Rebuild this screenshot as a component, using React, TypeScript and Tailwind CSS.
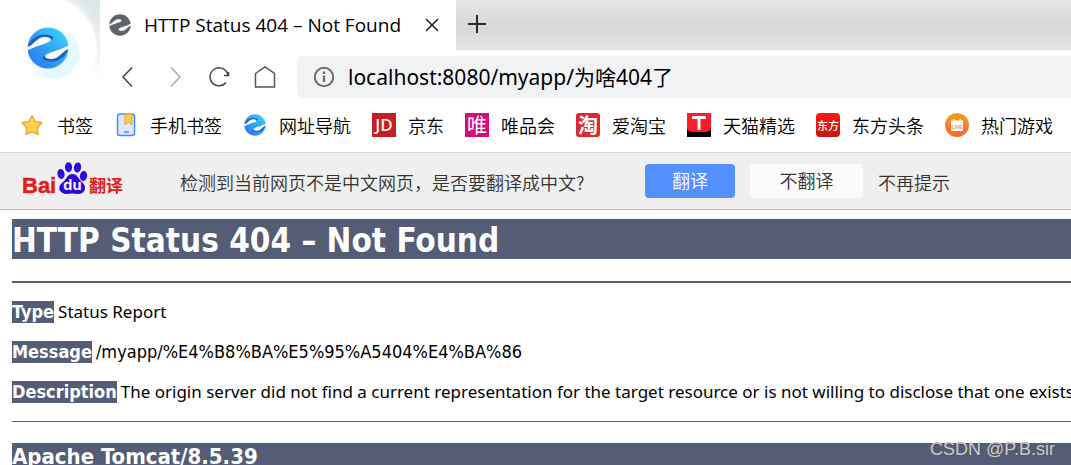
import {useId} from 'react';

const bookmarks = [
  {label: '书签', icon: <StarIcon />},
  {label: '手机书签', icon: <PhoneBookmarkIcon />},
  {label: '网址导航', icon: <BrowserLogo className="w-[22px] h-[22px]" />},
  {
    label: '京东',
    icon: (
      <span className="w-6 h-6 flex items-center justify-center bg-[#c41e25] text-[#fbeeee] text-[17px] leading-6 font-semibold font-['Open_Sans',sans-serif]">
        JD
      </span>
    ),
  },
  {
    label: '唯品会',
    icon: (
      <span className="w-6 h-6 flex items-center justify-center bg-[#d20d7c] text-white text-[20px] font-normal leading-6">
        唯
      </span>
    ),
  },
  {
    label: '爱淘宝',
    icon: (
      <span className="w-6 h-6 flex items-center justify-center rounded-[3px] bg-[#da2a2e] text-white text-[20px] font-bold leading-6">
        淘
      </span>
    ),
  },
  {label: '天猫精选', icon: <TmallIcon />},
  {
    label: '东方头条',
    icon: (
      <span className="w-6 h-6 flex items-center justify-center rounded bg-linear-to-b from-[#fb1b12] to-[#c4160d] text-white text-[11px] font-medium leading-6">
        东方
      </span>
    ),
  },
  {label: '热门游戏', icon: <LiveIcon />},
];

const report = [
  {title: 'Type', text: 'Status Report', font: "text-[17px] font-['Noto_Sans',sans-serif]"},
  {
    title: 'Message',
    text: '/myapp/%E4%B8%BA%E5%95%A5404%E4%BA%86',
    font: "text-[18px] font-['DejaVu_Sans_Condensed',sans-serif]",
  },
  {
    title: 'Description',
    text: 'The origin server did not find a current representation for the target resource or is not willing to disclose that one exists.',
    font: "text-[17px] font-['Noto_Sans',sans-serif]",
  },
];

export default function App() {
  return (
    <div className="relative h-screen flex flex-col overflow-hidden whitespace-nowrap bg-white text-black font-['Noto_Sans_CJK_SC',sans-serif]">
      <BrowserHeader />
      <BookmarkBar />
      <TranslateBar />
      <ErrorPage />
      <span className="absolute right-4 bottom-1 text-[18px] leading-6 text-[#c9cad0] font-['Liberation_Sans',sans-serif] [text-shadow:1px_1px_1px_#555]">
        CSDN @P.B.sir
      </span>
    </div>
  );
}

const BrowserHeader = () => {
  return (
    <header className="flex shrink-0">
      <div className="w-[100px] h-[104px] shrink-0 overflow-hidden bg-[linear-gradient(to_top_right,#fff_60%,#d6e2e7)]">
        <div className="-ml-2 -mt-1 w-[104px] h-[104px] pl-2 rounded-full bg-white shadow-[0_0_4px_#fff] flex items-center justify-center">
          <div className="relative w-[42px] h-[42px]">
            <div className="absolute left-0 top-0 w-[52px] h-[52px] rounded-full bg-linear-to-tl from-[#dcf6ff] to-white" />
            <BrowserLogo className="relative w-[42px] h-[42px]" />
          </div>
        </div>
      </div>
      <div className="grow min-w-0">
        <div className="h-[50px] flex bg-[linear-gradient(#e5e5e5,#d9d9d9_45%,#d9d9d9_60%,#e5e5e5)]">
          <div className="w-[356px] shrink-0 flex items-center pl-[9px] pr-4 bg-white">
            <BrowserLogo className="w-[22px] h-[22px] shrink-0" grey />
            <span className="grow pl-[13px] text-[19px] leading-6 font-['Open_Sans',sans-serif]">
              HTTP Status 404 – Not Found
            </span>
            <button aria-label="Close tab" className="w-4 h-6 flex items-center justify-center">
              <svg width="14" height="14" viewBox="0 0 14 14" stroke="#222" strokeWidth="1.6">
                <path d="M1 1L13 13M13 1L1 13" />
              </svg>
            </button>
          </div>
          <button aria-label="New tab" className="w-[42px] flex items-center justify-center">
            <svg width="20" height="20" viewBox="0 0 20 20" stroke="#2a2a2a" strokeWidth="2">
              <path d="M1 9H19M10 0V18" />
            </svg>
          </button>
        </div>
        <Toolbar />
      </div>
    </header>
  );
};

const Toolbar = () => {
  return (
    <div className="flex items-center pt-[6px] pb-[7px] pl-4">
      <nav className="flex gap-[22px] pr-[19px]" aria-label="History">
        <button aria-label="Back" className="w-6 h-6">
          <svg viewBox="0 0 24 24" fill="none" stroke="#444" strokeWidth="1.5">
            <path d="M16 2.5L7 12L16 21.5" />
          </svg>
        </button>
        <button aria-label="Forward" className="w-6 h-6">
          <svg viewBox="0 0 24 24" fill="none" stroke="#aaa" strokeWidth="1.5">
            <path d="M9 2.5L18 12L9 21.5" />
          </svg>
        </button>
        <button aria-label="Reload" className="w-6 h-6">
          <svg viewBox="0 0 24 24" fill="none" stroke="#444" strokeWidth="1.5">
            <path d="M18 17.5A9 9 0 1 1 20 11M16 10.5H20.500V7" />
          </svg>
        </button>
        <button aria-label="Home" className="w-6 h-6">
          <svg viewBox="0 0 24 24" fill="none" stroke="#555" strokeWidth="1.5">
            <path d="M1.500 8.500L11 2L20.500 8.500V22H1.500Z" />
          </svg>
        </button>
      </nav>
      <div className="grow min-w-0 h-[42px] flex items-center gap-[13px] pl-4 rounded-l-md bg-[#f1f2f4]">
        <svg width="22" height="22" viewBox="0 0 22 22" fill="none" stroke="#6b6d70" className="shrink-0">
          <circle cx="11" cy="11" r="9.2" strokeWidth="2" />
          <path d="M11 9.5V16M11 5.5V8" strokeWidth="2.4" />
        </svg>
        <input
          aria-label="Address"
          defaultValue="localhost:8080/myapp/为啥404了"
          className="grow min-w-0 bg-transparent outline-none text-[21px] leading-8 font-['Noto_Sans','Noto_Sans_CJK_SC',sans-serif]"
        />
      </div>
    </div>
  );
};

const BookmarkBar = () => {
  return (
    <nav aria-label="Bookmarks" className="h-12 shrink-0 flex items-center gap-[21px] pl-[21px] pb-2 border-b border-[#d8d8dd]">
      {bookmarks.map(({label, icon}) => (
        <a key={label} href="#" className="flex items-center gap-3 text-[18px] leading-6 font-[350]">
          <span className="w-6 h-6 flex items-center justify-center" aria-hidden>
            {icon}
          </span>
          {label}
        </a>
      ))}
    </nav>
  );
};

const TranslateBar = () => {
  return (
    <section className="h-[57px] shrink-0 flex items-center pl-[22px] pb-px bg-[#efefef] border-b border-[#bbb] text-[18px] font-[350] text-[#333]">
      <BaiduLogo />
      <p className="w-[521px] shrink-0 pl-[56px] pt-1">检测到当前网页不是中文网页，是否要翻译成中文?</p>
      <button className="w-[90px] h-[34px] rounded bg-[#5590ff] text-white">翻译</button>
      <button className="w-[113px] h-[34px] ml-[15px] rounded bg-[#fbfbfb]">不翻译</button>
      <button className="ml-[15px] pt-1">不再提示</button>
    </section>
  );
};

const ErrorPage = () => {
  return (
    <main className="pl-3 pt-[9px] font-['DejaVu_Sans_Condensed',sans-serif]">
      <h1 className="h-10 bg-[#545c76] text-white text-[33px] leading-[44px] font-bold">HTTP Status 404 – Not Found</h1>
      <hr className="mt-[22px] mb-[18px] border-t-2 border-[#545c76]" />
      <div className="flex flex-col gap-[18px]">
        {report.map(({title, text, font}) => (
          <p key={title} className="flex gap-1 text-[18px] leading-[22px]">
            <b className="bg-[#545c76] text-white">{title}</b>
            <span className={font}>{text}</span>
          </p>
        ))}
      </div>
      <hr className="mt-[18px] mb-[21px] border-[#545c76]" />
      <h3 className="bg-[#545c76] text-white text-[22px] leading-[28px] font-bold">Apache Tomcat/8.5.39</h3>
    </main>
  );
};

function BrowserLogo({className, grey = false}: {className: string; grey?: boolean}) {
  const id = useId();
  return (
    <svg viewBox="0 0 42 42" className={className} aria-hidden>
      <defs>
        <linearGradient id={id} x1="1" y1="0" x2="0" y2="1">
          <stop offset="0.15" stopColor={grey ? '#606468' : '#37cbf8'} />
          <stop offset="0.85" stopColor={grey ? '#606468' : '#2b7ff0'} />
        </linearGradient>
      </defs>
      <circle cx="21" cy="21" r="20.500" fill={`url(#${id})`} />
      {['', 'rotate(180 21 21)'].map(turn => (
        <g key={turn} transform={turn}>
          {!grey && <path d="M2 17C6 9 14 6 22 8C25 9 28 10 25 13C20 10 16 11 12 15C9 18 6 19 1 20Z" fill="#1f62bd" />}
          <path d="M-1 20.500C7 19 9 10 18 10C23 10 26 12 22 15C18 17 13 18 8 20L-1 24Z" fill="#fff" />
        </g>
      ))}
    </svg>
  );
}

function StarIcon() {
  return (
    <svg width="24" height="24" viewBox="0 0 24 24" fill="#ffd34f" stroke="#f4a52c" strokeWidth="1.5" strokeLinejoin="round">
      <path d="M11 2.5L14 8.800L21 9.800L16 14.700L17.200 21.200L11 18.800L4.800 21.200L6 14.700L1 9.800L8 8.800Z" />
    </svg>
  );
}

function PhoneBookmarkIcon() {
  return (
    <svg width="24" height="24" viewBox="0 0 24 24" fill="none">
      <rect x="3.5" y="1" width="17" height="21.4" rx="2.5" fill="#dbe8ff" stroke="#438cf8" strokeWidth="1.5" />
      <path d="M11 1H18V12L14.5 9L11 12Z" fill="#ffc84a" stroke="#f0a02c" />
      <path d="M10 19H15" stroke="#438cf8" strokeWidth="1.5" />
    </svg>
  );
}

function TmallIcon() {
  return (
    <svg width="24" height="24" viewBox="0 0 24 24">
      <path d="M0 0H24V24H0Z" fill="#ff1a2d" />
      <path d="M0 16Q2 19 5 19H19Q22 19 24 16V24H0Z" fill="#080405" />
      <path d="M5 3H19V6H13.5V17H10.500V6H5Z" fill="#fff" />
    </svg>
  );
}

function LiveIcon() {
  return (
    <svg width="24" height="24" viewBox="0 0 24 24">
      <defs>
        <linearGradient id="live" x2="0" y2="1">
          <stop stopColor="#f6a021" />
          <stop offset="1" stopColor="#fa6632" />
        </linearGradient>
      </defs>
      <circle cx="12" cy="12" r="12" fill="url(#live)" />
      <path d="M6 7.5H8V6H9.5V7.5H14.5V6H16V7.5H18V18H6Z" fill="#fff" />
      <text x="12" y="15.5" textAnchor="middle" fontSize="5" fontWeight="700" fill="#f98a3a" fontFamily="Liberation Sans">
        LIVE
      </text>
    </svg>
  );
}

function BaiduLogo() {
  return (
    <svg width="102" height="38" viewBox="0 0 102 38" className="shrink-0" role="img" aria-label="Baidu 翻译">
      <g fill="#e01f1a" stroke="#e01f1a" strokeWidth="0.5" fontWeight="700">
        <text x="0" y="31" fontSize="22" fontFamily="Liberation Sans">
          Bai
        </text>
        <text x="67" y="30" fontSize="17" fontFamily="Noto Sans CJK SC" strokeWidth="0">
          翻译
        </text>
      </g>
      <g fill="#3109dc">
        <ellipse cx="39" cy="12" rx="3.6" ry="5" transform="rotate(-10 39 12)" />
        <ellipse cx="46.5" cy="5.2" rx="3.6" ry="5" />
        <ellipse cx="55.5" cy="5.5" rx="3.6" ry="5" transform="rotate(10 55.5 5.5)" />
        <ellipse cx="61.5" cy="14" rx="3.6" ry="5" transform="rotate(10 61.5 14)" />
        <path d="M50.500 12C56 12 56 17 60 20C65 24 64 32 56 32Q50 31 45 32C37 32 35 25 40 21C45 17 45 12 50.500 12Z" />
      </g>
      <text x="50.500" y="28" textAnchor="middle" fontSize="15" fontWeight="700" fill="#fff" fontFamily="Liberation Sans">
        du
      </text>
    </svg>
  );
}
